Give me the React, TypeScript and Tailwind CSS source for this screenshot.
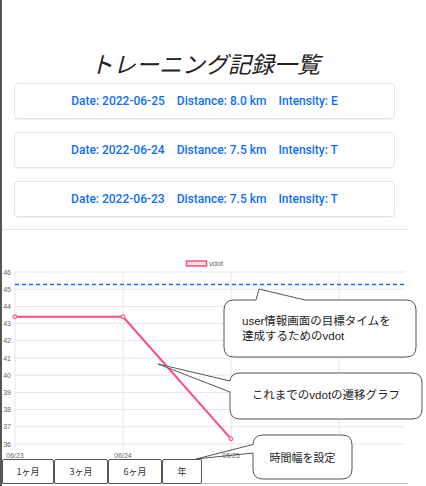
import React from "react";

const yv = (v: number) => 272 + (46 - v) * 17.2;

const records = [
  { date: "2022-06-25", dist: "8.0", int: "E" },
  { date: "2022-06-24", dist: "7.5", int: "T" },
  { date: "2022-06-23", dist: "7.5", int: "T" },
];

function Chart() {
  const ticks = [46, 45, 44, 43, 42, 41, 40, 39, 38, 37, 36];
  const xs = [15, 123, 231, 339];
  const pts: [number, number][] = [
    [15, yv(43.4)],
    [123, yv(43.4)],
    [231, yv(36.3)],
  ];
  return (
    <svg width={406} height={229} viewBox="2 230 406 229" className="block">
      <rect x={186.5} y={261} width={20} height={5} fill="#ffe0e6" stroke="#ff4d7d" strokeWidth={1.5} />
      <text x={209} y={266} fontSize={7.5} fill="#666" fontFamily="Liberation Sans, sans-serif">
        vdot
      </text>
      {ticks.map((t) => (
        <g key={t}>
          <line x1={15} x2={405} y1={yv(t)} y2={yv(t)} stroke="#e6e6e6" strokeWidth={1} />
          <text x={11} y={yv(t) + 2.6} fontSize={7} fill="#666" textAnchor="end" fontFamily="Liberation Sans, sans-serif">
            {t}
          </text>
        </g>
      ))}
      {xs.map((x) => (
        <line key={x} x1={x} x2={x} y1={272} y2={450} stroke="#e6e6e6" strokeWidth={1} />
      ))}
      {["06/23", "06/24", "06/25"].map((l, i) => (
        <text key={l} x={xs[i]} y={457.5} fontSize={7} fill="#666" textAnchor="middle" fontFamily="Liberation Sans, sans-serif">
          {l}
        </text>
      ))}
      <line x1={15} x2={405} y1={284.5} y2={284.5} stroke="#1a6ff0" strokeWidth={1.5} strokeDasharray="4 3" />
      <polyline
        points={pts.map((p) => p.join(",")).join(" ")}
        fill="none"
        stroke="#ff4d7d"
        strokeWidth={2}
        strokeLinejoin="round"
      />
      {pts.map((p, i) => (
        <circle key={i} cx={p[0]} cy={p[1]} r={2} fill="#ffd6e0" stroke="#ff4d7d" strokeWidth={1} />
      ))}
    </svg>
  );
}

function Callouts() {
  return (
    <>
      <svg width={426} height={486} className="absolute left-0 top-0 pointer-events-none">
        <path
          d="M 234 300 L 256 300 L 259 289 L 305 300 L 406 300 Q 416 300 416 310 L 416 347 Q 416 357 406 357 L 234 357 Q 224 357 224 347 L 224 310 Q 224 300 234 300 Z"
          fill="#fff"
          stroke="#555"
          strokeWidth={1}
        />
        <path
          d="M 240 373 L 412 373 Q 422 373 422 383 L 422 409 Q 422 419 412 419 L 240 419 Q 230 419 230 409 L 230 392 L 158 364 L 230 381 Q 231 373 240 373 Z"
          fill="#fff"
          stroke="#555"
          strokeWidth={1}
        />
        <path
          d="M 263 435 L 342 435 Q 352 435 352 445 L 352 469 Q 352 479 342 479 L 263 479 Q 253 479 253 469 L 253 445 Q 253 435 263 435 Z"
          fill="#fff"
          stroke="none"
        />
        <path
          d="M 263 435 L 342 435 Q 352 435 352 445 L 352 469 Q 352 479 342 479 L 263 479 Q 253 479 253 469 L 253 453 L 196 459 L 253 444.5 Q 253.5 435 263 435 Z"
          fill="none"
          stroke="#555"
          strokeWidth={1}
        />
      </svg>
      <div
        className="absolute left-[242px] top-[314px] text-[11.5px] leading-[15px] text-[#222]"
        style={{ fontFamily: '"Liberation Sans", "Noto Sans CJK JP", sans-serif' }}
      >
        <div>user情報画面の目標タイムを</div>
        <div>達成するためのvdot</div>
      </div>
      <div
        className="absolute left-[230px] top-[373px] w-[192px] h-[46px] flex items-center justify-center text-[11.5px] text-[#222]"
        style={{ fontFamily: '"Liberation Sans", "Noto Sans CJK JP", sans-serif' }}
      >
        これまでのvdotの遷移グラフ
      </div>
      <div
        className="absolute left-[253px] top-[435px] w-[99px] h-[44px] flex items-center justify-center text-[11px] text-[#222]"
        style={{ fontFamily: '"Noto Sans CJK JP", sans-serif' }}
      >
        時間幅を設定
      </div>
    </>
  );
}

export default function App() {
  return (
    <div className="relative w-[426px] h-[486px] overflow-hidden bg-white">
      <div className="w-[408px] h-[486px] border-l-2 border-[#555] flex flex-col">
        <div
          className="mt-[48px] h-[35px] leading-[31px] text-center italic text-[23px] text-[#222]"
          style={{ fontFamily: '"Noto Sans CJK JP", sans-serif' }}
        >
          トレーニング記録一覧
        </div>
        <div className="flex flex-col gap-[13px] pl-[12px] pr-[13px]">
          {records.map((r) => (
            <div
              key={r.date}
              className="h-[36px] rounded-[4px] border border-[#e3e5e8] shadow-[0_1px_1px_rgba(0,0,0,0.06)] flex items-center justify-center gap-[12px] text-[12px] font-medium text-[#0d6efd]"
              style={{ fontFamily: 'Roboto, "Liberation Sans", sans-serif' }}
            >
              <span>Date: {r.date}</span>
              <span>Distance: {r.dist} km</span>
              <span>Intensity: {r.int}</span>
            </div>
          ))}
        </div>
        <div className="mt-[12px] h-px bg-[#e6e6e6]" />
        <Chart />
        <div className="flex h-[25px] border-b border-[#bbb]">
          {[
            ["1ヶ月", "w-[52px]"],
            ["3ヶ月", "w-[54px]"],
            ["6ヶ月", "w-[54px]"],
            ["年", "w-[40px]"],
          ].map(([l, w]) => (
            <div
              key={l}
              className={`${w} h-[25px] border border-[#555] rounded-[2px] bg-white flex items-center justify-center text-[9px] text-[#333]`}
              style={{ fontFamily: '"Noto Sans CJK JP", sans-serif' }}
            >
              {l}
            </div>
          ))}
        </div>
      </div>
      <Callouts />
    </div>
  );
}
